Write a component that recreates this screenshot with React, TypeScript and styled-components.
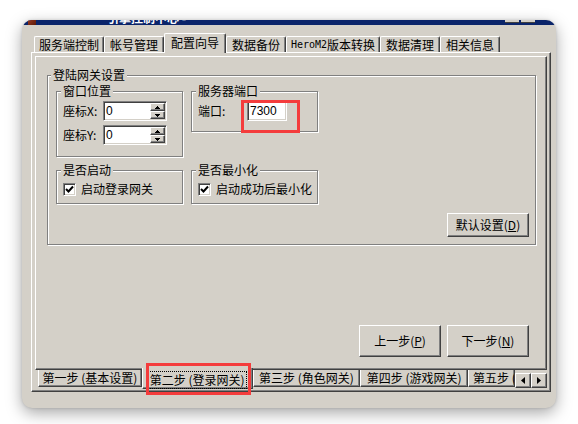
import React from "react";
import styled, { createGlobalStyle } from "styled-components";

const face = "#d4d0c8";

const GlobalStyle = createGlobalStyle`
  html, body {
    margin: 0;
    padding: 0;
    background: #fff;
  }
  body {
    font-family: "Noto Sans CJK SC", "Liberation Sans", sans-serif;
    font-size: 12px;
    color: #000;
  }
`;

const Screen = styled.div`
  width: 578px;
  height: 424px;
  box-sizing: border-box;
  padding: 20px 0 0 22px;
  overflow: hidden;
`;

const Window = styled.div`
  width: 534px;
  height: 388px;
  display: flex;
  flex-direction: column;
  background: ${face};
  border-radius: 10px;
  overflow: hidden;
  box-shadow: 0 5px 16px rgba(0, 0, 0, 0.35), 0 0 3px rgba(0, 0, 0, 0.15);
`;

// only the bottom strip of the title bar is visible in the shot
const Caption = styled.div`
  flex: none;
  height: 5px;
  display: flex;
  align-items: flex-end;
  padding: 0 21px 0 6px;
  background: #0a246a;
  overflow: hidden;
`;

const CaptionIcon = styled.div`
  flex: none;
  width: 8px;
  height: 16px;
  background: linear-gradient(135deg, #d05030, #5a1a0a);
`;

const CaptionText = styled.div`
  margin-left: 71px;
  color: #fff;
  font-weight: 700;
  line-height: 15px;
  white-space: nowrap;
`;

const CaptionButtons = styled.div`
  margin-left: auto;
  margin-bottom: 2px;
  display: flex;
  gap: 2px;
`;

const CaptionButton = styled.div`
  width: 14px;
  height: 14px;
  background: ${face};
  border-bottom: 1px solid #404040;
`;

const Body = styled.div`
  flex: 1;
  display: flex;
  flex-direction: column;
  padding: 8px 5px 16px 9px;
`;

const TabRow = styled.div`
  flex: none;
  height: 19px;
  display: flex;
  align-items: flex-end;
  padding-left: 3px;
  position: relative;
  z-index: 1;
`;

const Tab = styled.div<{ $w: number; $active?: boolean }>`
  box-sizing: border-box;
  width: ${(p) => p.$w}px;
  height: ${(p) => (p.$active ? 20 : 16)}px;
  margin-bottom: ${(p) => (p.$active ? -1 : 0)}px;
  padding-bottom: ${(p) => (p.$active ? 2 : 0)}px;
  display: flex;
  align-items: center;
  justify-content: center;
  border-top: 1px solid #fff;
  border-left: 1px solid #fff;
  border-right: 1px solid #404040;
  border-radius: 2px 2px 0 0;
  box-shadow: inset -1px 0 #808080;
  background: ${face};
  line-height: 14px;
  white-space: nowrap;
`;

const Latin = styled.span`
  font-family: "DejaVu Sans Mono", "Liberation Mono", monospace;
  font-size: 10px;
`;

const Panel = styled.div`
  flex: 1;
  display: flex;
  flex-direction: column;
  border: 1px solid;
  border-color: #fff #404040 #404040 #fff;
  box-shadow: inset -1px -1px #808080;
  padding: 3px 3px 4px 3px;
`;

const Wizard = styled.div`
  flex: 1;
  display: flex;
  flex-direction: column;
`;

const Page = styled.div`
  flex: 1;
  display: flex;
  flex-direction: column;
  border: 1px solid;
  border-color: #fff #404040 #404040 #fff;
  box-shadow: inset -1px -1px #808080;
  padding: 18px 10px 12px 11px;
`;

const GroupBox = styled.div<{ $pad?: string }>`
  position: relative;
  box-sizing: border-box;
  border: 1px solid #808080;
  box-shadow: inset 1px 1px #fff, 1px 1px #fff;
  padding: ${(p) => p.$pad || "0"};
`;

const GroupTitle = styled.span<{ $left: number }>`
  position: absolute;
  top: -8px;
  left: ${(p) => p.$left}px;
  padding: 0 2px;
  background: ${face};
  line-height: 14px;
  white-space: nowrap;
`;

const GroupGrid = styled.div`
  display: grid;
  grid-template-columns: 127px 127px;
  column-gap: 8px;
  row-gap: 13px;
  align-items: start;
`;

const Fields = styled.div`
  display: flex;
  flex-direction: column;
  gap: 4px;
`;

const FieldRow = styled.div`
  display: flex;
  align-items: center;
`;

const Label = styled.span<{ $w: number }>`
  width: ${(p) => p.$w}px;
  line-height: 14px;
  white-space: nowrap;
`;

const Edit = styled.div<{ $w: number }>`
  position: relative;
  box-sizing: border-box;
  width: ${(p) => p.$w}px;
  height: 20px;
  display: flex;
  border: 1px solid;
  border-color: #808080 #fff #fff #808080;
  box-shadow: inset 1px 1px #404040, inset -1px -1px ${face};
  background: #fff;
  padding: 1px;
`;

const EditValue = styled.span`
  flex: 1;
  padding-left: 1px;
  line-height: 16px;
  font-family: "Liberation Sans", "Noto Sans CJK SC", sans-serif;
`;

const Spin = styled.div`
  width: 15px;
  display: flex;
  flex-direction: column;
`;

const SpinHalf = styled.div`
  flex: 1;
  box-sizing: border-box;
  display: flex;
  align-items: center;
  justify-content: center;
  border: 1px solid;
  border-color: #fff #404040 #404040 #fff;
  box-shadow: inset -1px -1px #808080;
  background: ${face};
`;

const Mark = styled.div<{ $l: number; $t: number; $w: number; $h: number }>`
  position: absolute;
  left: ${(p) => p.$l}px;
  top: ${(p) => p.$t}px;
  width: ${(p) => p.$w}px;
  height: ${(p) => p.$h}px;
  box-sizing: border-box;
  border: 3px solid #f43c3c;
  z-index: 5;
  pointer-events: none;
`;

const CheckRow = styled.div`
  display: flex;
  align-items: center;
  gap: 5px;
  line-height: 14px;
  white-space: nowrap;
`;

const CheckBox = styled.div`
  box-sizing: border-box;
  width: 13px;
  height: 13px;
  display: flex;
  align-items: center;
  justify-content: center;
  border: 1px solid;
  border-color: #808080 #fff #fff #808080;
  box-shadow: inset 1px 1px #404040, inset -1px -1px ${face};
  background: #fff;
`;

const ButtonRow = styled.div<{ $gap: number; $right: number; $top?: string }>`
  display: flex;
  justify-content: flex-end;
  gap: ${(p) => p.$gap}px;
  margin-right: ${(p) => p.$right}px;
  margin-top: ${(p) => p.$top || "0"};
`;

const Button = styled.button<{ $h: number }>`
  box-sizing: border-box;
  width: 82px;
  height: ${(p) => p.$h}px;
  padding: 0;
  display: flex;
  align-items: center;
  justify-content: center;
  border: 1px solid;
  border-color: #fff #404040 #404040 #fff;
  box-shadow: inset -1px -1px #808080;
  background: ${face};
  font: inherit;
  color: #000;
  line-height: 14px;
  white-space: nowrap;
`;

const StepStrip = styled.div`
  flex: none;
  height: 17px;
  display: flex;
  align-items: flex-start;
  padding-left: 3px;
`;

const StepTab = styled.div<{ $w: number; $active?: boolean; $clip?: boolean }>`
  position: relative;
  box-sizing: border-box;
  width: ${(p) => p.$w}px;
  height: ${(p) => (p.$active ? 21 : 17)}px;
  margin-top: ${(p) => (p.$active ? -2 : 0)}px;
  padding: ${(p) => (p.$active ? "3px 0 0" : p.$clip ? "0 0 0 4px" : "0")};
  display: flex;
  align-items: center;
  justify-content: ${(p) => (p.$clip ? "flex-start" : "center")};
  border-left: 1px solid #fff;
  border-right: 1px solid #404040;
  border-bottom: 1px solid #404040;
  box-shadow: inset -1px -1px #808080;
  background: ${face};
  line-height: 14px;
  white-space: nowrap;
  overflow: ${(p) => (p.$clip ? "hidden" : "visible")};
`;

const Focus = styled.span`
  outline: 1px dotted #000;
  outline-offset: 1px;
`;

const Arrows = styled.div`
  display: flex;
  margin-top: 3px;
`;

const ArrowButton = styled.div`
  box-sizing: border-box;
  width: 16px;
  height: 15px;
  display: flex;
  align-items: center;
  justify-content: center;
  border: 1px solid;
  border-color: #fff #404040 #404040 #fff;
  box-shadow: inset -1px -1px #808080;
  background: ${face};
`;

const Tri = ({ dir }: { dir: "up" | "down" | "left" | "right" }) => {
  if (dir === "up" || dir === "down") {
    const pts = dir === "up" ? "0,3 5,3 2.5,0" : "0,0 5,0 2.5,3";
    return (
      <svg width="5" height="3" viewBox="0 0 5 3" shapeRendering="crispEdges">
        <polygon points={pts} fill="#000" />
      </svg>
    );
  }
  const pts = dir === "left" ? "4,0 4,7 0,3.5" : "0,0 0,7 4,3.5";
  return (
    <svg width="4" height="7" viewBox="0 0 4 7">
      <polygon points={pts} fill="#000" />
    </svg>
  );
};

const Check = () => (
  <svg width="9" height="9" viewBox="0 0 9 9">
    <polyline points="1,4 3.5,6.5 8,1.5" fill="none" stroke="#000" strokeWidth="2" />
  </svg>
);

const SpinEdit = ({ value }: { value: string }) => (
  <Edit $w={64}>
    <EditValue>{value}</EditValue>
    <Spin>
      <SpinHalf>
        <Tri dir="up" />
      </SpinHalf>
      <SpinHalf>
        <Tri dir="down" />
      </SpinHalf>
    </Spin>
  </Edit>
);

const mainTabs: { label: React.ReactNode; key: string; w: number; active?: boolean }[] = [
  { key: "srv", label: "服务端控制", w: 70 },
  { key: "acc", label: "帐号管理", w: 60 },
  { key: "cfg", label: "配置向导", w: 62, active: true },
  { key: "bak", label: "数据备份", w: 60 },
  {
    key: "hero",
    label: (
      <>
        <Latin>HeroM2</Latin>版本转换
      </>
    ),
    w: 94,
  },
  { key: "clr", label: "数据清理", w: 60 },
  { key: "about", label: "相关信息", w: 60 },
];

export default function App() {
  return (
    <Screen>
      <GlobalStyle />
      <Window>
        <Caption>
          <CaptionIcon />
          <CaptionText>引擎控制中心 -</CaptionText>
          <CaptionButtons>
            <CaptionButton />
            <CaptionButton />
          </CaptionButtons>
        </Caption>
        <Body>
          <TabRow>
            {mainTabs.map((t) => (
              <Tab key={t.key} $w={t.w} $active={t.active}>
                {t.label}
              </Tab>
            ))}
          </TabRow>
          <Panel>
            <Wizard>
              <Page>
                <GroupBox $pad="15px 0 7px 8px">
                  <GroupTitle $left={3}>登陆网关设置</GroupTitle>
                  <GroupGrid>
                    <GroupBox $pad="9px 0 11px 6px">
                      <GroupTitle $left={4}>窗口位置</GroupTitle>
                      <Fields>
                        <FieldRow>
                          <Label $w={40}>座标X:</Label>
                          <SpinEdit value="0" />
                        </FieldRow>
                        <FieldRow>
                          <Label $w={40}>座标Y:</Label>
                          <SpinEdit value="0" />
                        </FieldRow>
                      </Fields>
                    </GroupBox>
                    <GroupBox $pad="9px 0 10px 6px">
                      <GroupTitle $left={4}>服务器端口</GroupTitle>
                      <FieldRow>
                        <Label $w={49}>端口:</Label>
                        <Edit $w={40}>
                          <EditValue>7300</EditValue>
                          <Mark $l={-7} $t={-2} $w={59} $h={33} />
                        </Edit>
                      </FieldRow>
                    </GroupBox>
                    <GroupBox $pad="11px 0 7px 6px">
                      <GroupTitle $left={4}>是否启动</GroupTitle>
                      <CheckRow>
                        <CheckBox>
                          <Check />
                        </CheckBox>
                        启动登录网关
                      </CheckRow>
                    </GroupBox>
                    <GroupBox $pad="11px 0 7px 6px">
                      <GroupTitle $left={4}>是否最小化</GroupTitle>
                      <CheckRow>
                        <CheckBox>
                          <Check />
                        </CheckBox>
                        启动成功后最小化
                      </CheckRow>
                    </GroupBox>
                  </GroupGrid>
                  <ButtonRow $gap={0} $right={6} $top="9px">
                    <Button $h={24}>
                      默认设置(<u>D</u>)
                    </Button>
                  </ButtonRow>
                </GroupBox>
                <ButtonRow $gap={6} $right={7} $top="auto">
                  <Button $h={32}>
                    上一步(<u>P</u>)
                  </Button>
                  <Button $h={32}>
                    下一步(<u>N</u>)
                  </Button>
                </ButtonRow>
              </Page>
              <StepStrip>
                <StepTab $w={104}>第一步 (基本设置)</StepTab>
                <StepTab $w={111} $active>
                  <Focus>第二步 (登录网关)</Focus>
                  <Mark $l={3} $t={-5} $w={105} $h={32} />
                </StepTab>
                <StepTab $w={108}>第三步 (角色网关)</StepTab>
                <StepTab $w={108}>第四步 (游戏网关)</StepTab>
                <StepTab $w={47} $clip>
                  第五步 (数据库服务)
                </StepTab>
                <Arrows>
                  <ArrowButton>
                    <Tri dir="left" />
                  </ArrowButton>
                  <ArrowButton>
                    <Tri dir="right" />
                  </ArrowButton>
                </Arrows>
              </StepStrip>
            </Wizard>
          </Panel>
        </Body>
      </Window>
    </Screen>
  );
}
